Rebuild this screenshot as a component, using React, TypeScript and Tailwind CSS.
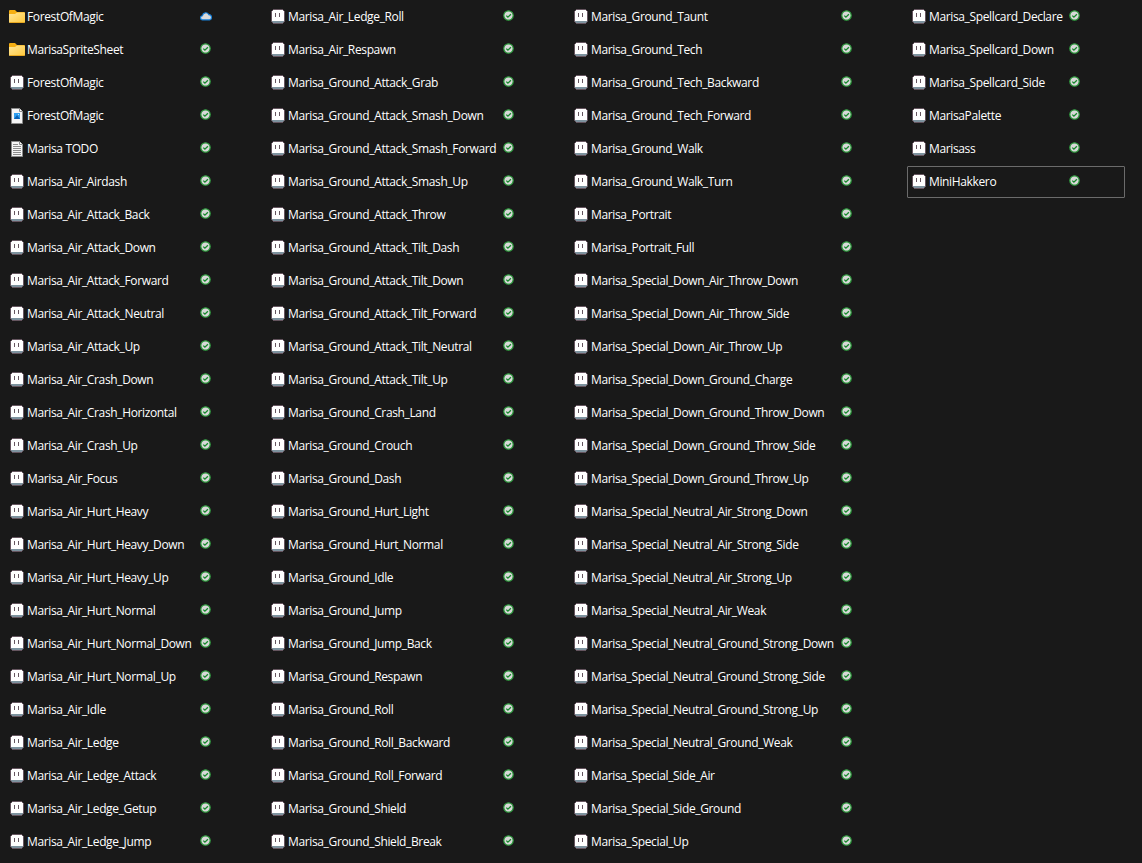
type FileKind = "folder" | "sprite" | "image" | "text";

interface FileItem {
  name: string;
  kind?: FileKind;
  cloud?: boolean;
  focused?: boolean;
}

const sprites = (prefix: string, names: string[]): FileItem[] =>
  names.map((name) => ({ name: prefix + name }));

const COLUMNS: { width: string; items: FileItem[] }[] = [
  {
    width: "w-[251px]",
    items: [
      { name: "ForestOfMagic", kind: "folder", cloud: true },
      { name: "MarisaSpriteSheet", kind: "folder" },
      { name: "ForestOfMagic" },
      { name: "ForestOfMagic", kind: "image" },
      { name: "Marisa TODO", kind: "text" },
      ...sprites("Marisa_Air_", [
        "Airdash", "Attack_Back", "Attack_Down", "Attack_Forward", "Attack_Neutral", "Attack_Up",
        "Crash_Down", "Crash_Horizontal", "Crash_Up", "Focus", "Hurt_Heavy", "Hurt_Heavy_Down",
        "Hurt_Heavy_Up", "Hurt_Normal", "Hurt_Normal_Down", "Hurt_Normal_Up", "Idle", "Ledge",
        "Ledge_Attack", "Ledge_Getup", "Ledge_Jump",
      ]),
    ],
  },
  {
    width: "w-[293px]",
    items: [
      ...sprites("Marisa_Air_", ["Ledge_Roll", "Respawn"]),
      ...sprites("Marisa_Ground_", [
        "Attack_Grab", "Attack_Smash_Down", "Attack_Smash_Forward", "Attack_Smash_Up",
        "Attack_Throw", "Attack_Tilt_Dash", "Attack_Tilt_Down", "Attack_Tilt_Forward",
        "Attack_Tilt_Neutral", "Attack_Tilt_Up", "Crash_Land", "Crouch", "Dash", "Hurt_Light",
        "Hurt_Normal", "Idle", "Jump", "Jump_Back", "Respawn", "Roll", "Roll_Backward",
        "Roll_Forward", "Shield", "Shield_Break",
      ]),
    ],
  },
  {
    width: "w-[328px]",
    items: [
      ...sprites("Marisa_Ground_", ["Taunt", "Tech", "Tech_Backward", "Tech_Forward", "Walk", "Walk_Turn"]),
      ...sprites("Marisa_", ["Portrait", "Portrait_Full"]),
      ...sprites("Marisa_Special_", [
        "Down_Air_Throw_Down", "Down_Air_Throw_Side", "Down_Air_Throw_Up", "Down_Ground_Charge",
        "Down_Ground_Throw_Down", "Down_Ground_Throw_Side", "Down_Ground_Throw_Up",
        "Neutral_Air_Strong_Down", "Neutral_Air_Strong_Side", "Neutral_Air_Strong_Up",
        "Neutral_Air_Weak", "Neutral_Ground_Strong_Down", "Neutral_Ground_Strong_Side",
        "Neutral_Ground_Strong_Up", "Neutral_Ground_Weak", "Side_Air", "Side_Ground", "Up",
      ]),
    ],
  },
  {
    width: "w-[218px]",
    items: [
      ...sprites("Marisa_Spellcard_", ["Declare", "Down", "Side"]),
      { name: "MarisaPalette" },
      { name: "Marisass" },
      { name: "MiniHakkero", focused: true },
    ],
  },
];

function FolderIcon() {
  return (
    <svg className="shrink-0" width="16" height="16" viewBox="0 0 16 16">
      <defs>
        <linearGradient id="folder" x1="0" y1="0" x2="1" y2="1">
          <stop offset="0" stopColor="#ffe69a" />
          <stop offset="1" stopColor="#ffc83a" />
        </linearGradient>
      </defs>
      <path d="M0 2Q0 1 1 1H6L8 3H15Q16 3 16 4V11H0Z" fill="#f5ae12" />
      <path d="M0 5H6L8 3.500H15Q16 3.500 16 4.500V13Q16 14 15 14H1Q0 14 0 13Z" fill="url(#folder)" />
      <path d="M1 13.500H15" stroke="#e9a820" />
    </svg>
  );
}

// Aseprite document icon, drawn on the pixel grid
function SpriteIcon() {
  return (
    <svg className="shrink-0" width="16" height="16" viewBox="0 0 16 16" shapeRendering="crispEdges">
      <path d="M3 0H13V1H14V2H15V13H14V14H13V15H3V14H2V13H1V2H2V1H3Z" fill="#65555f" />
      <path d="M3 1H13V2H14V12H2V2H3Z" fill="#fff" />
      <path d="M2 12H14V13H13V14H3V13H2Z" fill="#7d929e" />
      <path d="M5 4H6V8H5ZM9 4H10V8H9Z" fill="#65555f" />
    </svg>
  );
}

function PageIcon({ kind }: { kind: "image" | "text" }) {
  return (
    <svg className="shrink-0" width="16" height="16" viewBox="0 0 16 16">
      <path d="M2.500 .5H10.500L13.500 3.500V15.500H2.500Z" fill="#f5f5f5" stroke="#8a8a8a" />
      <path d="M10.500 .5V3.500H13.500" fill="#fff" stroke="#8a8a8a" />
      {kind === "image" ? (
        <>
          <path d="M5 5H11V11H5Z" fill="#2f9ff0" />
          <path d="M5 11L8 7L11 11Z" fill="#0b62b5" />
          <path d="M9 6H10V7H9Z" fill="#c5e8ff" />
        </>
      ) : (
        <path d="M4 3.500H9M4 5.500H12M4 7.500H12M4 9.500H12M4 11.500H12M4 13.500H12" stroke="#8c8c8c" />
      )}
    </svg>
  );
}

function FileIcon({ kind }: { kind: FileKind }) {
  if (kind === "folder") return <FolderIcon />;
  if (kind === "sprite") return <SpriteIcon />;
  return <PageIcon kind={kind} />;
}

function StatusIcon({ cloud }: { cloud?: boolean }) {
  return cloud ? (
    <svg width="12" height="12" viewBox="0 0 12 12">
      <path
        d="M2.700 9.900A2.100 2.100 0 0 1 2.500 5.700A3.300 3.300 0 0 1 8.700 4.600A2.700 2.700 0 0 1 9.500 9.900Z"
        fill="#dadada"
        stroke="#1680da"
        strokeWidth="1.100"
      />
    </svg>
  ) : (
    <svg width="12" height="12" viewBox="0 0 12 12">
      <circle cx="5.500" cy="5.500" r="4.700" fill="#d8d8d8" stroke="#2c9b3c" strokeWidth="1.200" />
      <path d="M3.300 5.600L4.900 7.200L7.900 4.200" fill="none" stroke="#15882b" strokeWidth="1.300" />
    </svg>
  );
}

function FileRow({ item }: { item: FileItem }) {
  return (
    <li className="h-[33px] pt-px">
      <div className={`flex h-8 items-center rounded-[1px] border pl-[3px] pr-[43px] ${item.focused ? "border-[#6b6b6b]" : "border-transparent"}`}>
        <FileIcon kind={item.kind ?? "sprite"} />
        <span className="ml-0.5 min-w-0 flex-1 whitespace-nowrap">{item.name}</span>
        <span className="w-3 shrink-0 pb-[3px]">
          <StatusIcon cloud={item.cloud} />
        </span>
      </div>
    </li>
  );
}

export default function App() {
  return (
    <main className="flex h-[863px] w-[1142px] gap-2.5 overflow-hidden bg-[#191919] pl-[5px] font-['Open_Sans','Noto_Sans',sans-serif] text-[12px] leading-4 tracking-[-0.36px] text-white">
      {COLUMNS.map((column, i) => (
        <ul key={i} className={`shrink-0 ${column.width}`}>
          {column.items.map((item, j) => (
            <FileRow key={j} item={item} />
          ))}
        </ul>
      ))}
    </main>
  );
}
